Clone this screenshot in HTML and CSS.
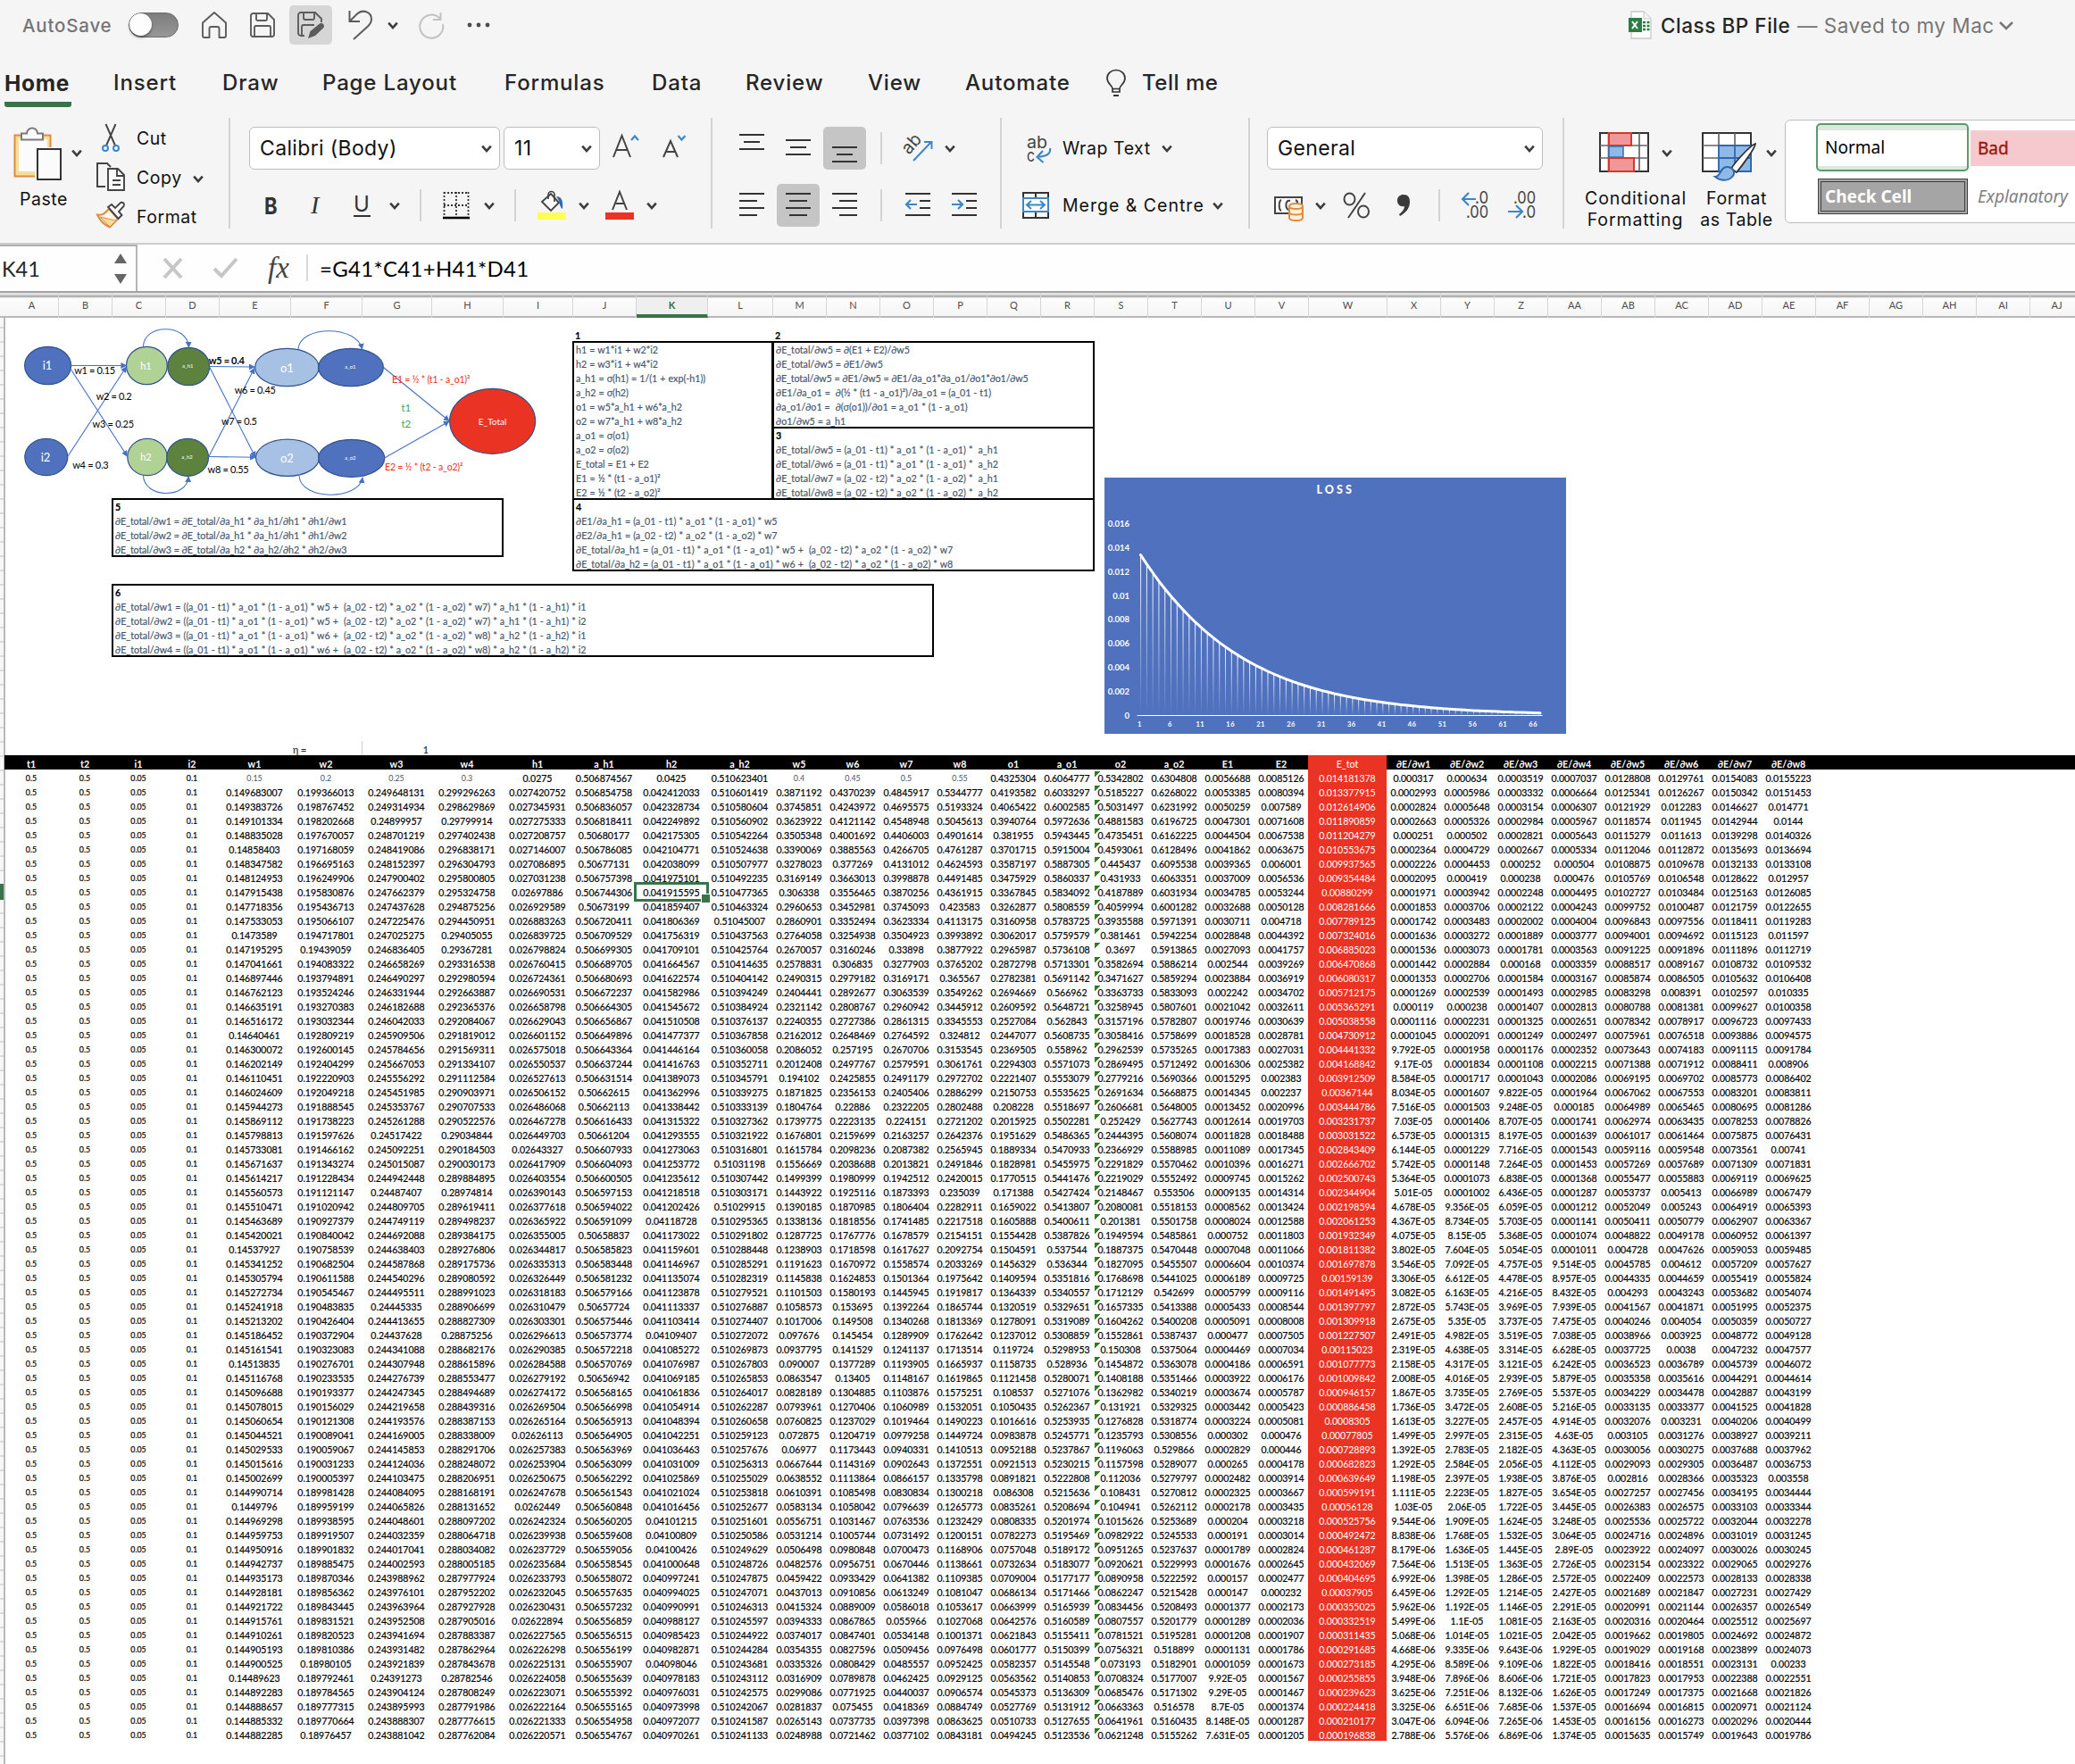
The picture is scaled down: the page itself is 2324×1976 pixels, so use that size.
FILE: index.html
```html
<!DOCTYPE html>
<html lang="en">
<head>
<meta charset="utf-8">
<title>Class BP File</title>
<link rel="stylesheet" href="styles.css">
</head>
<body>
<svg class="defs" width="0" height="0" aria-hidden="true">
  <symbol id="chev" viewBox="0 0 12 9"><path d="M1.2 1.6 6 7 10.8 1.6" fill="none" stroke="#3c3c3c" stroke-width="2.6"/></symbol>
  <symbol id="floppy" viewBox="0 0 28 28"><path d="M3.5 1H20l7 7v16.500a2.500 2.500 0 0 1-2.500 2.500h-21A2.500 2.500 0 0 1 1 24.500v-21A2.500 2.500 0 0 1 3.500 1zM7 1v6.500a1.500 1.500 0 0 0 1.500 1.500h9a1.500 1.500 0 0 0 1.500-1.500V1M5 27V16.500A1.500 1.500 0 0 1 6.500 15h15a1.500 1.500 0 0 1 1.500 1.500V27" fill="none" stroke="#5c5c5c" stroke-width="1.900"/></symbol>
</svg>

<header class="titlebar">
  <span class="autosave">AutoSave</span>
  <span class="toggle"><i></i></span>
  <svg width="30" height="32" viewBox="0 0 30 32"><path d="M2 13.500 15 2l13 11.500V28a2 2 0 0 1-2 2h-5.500V20a2 2 0 0 0-2-2h-7a2 2 0 0 0-2 2v10H4a2 2 0 0 1-2-2z" fill="none" stroke="#5c5c5c" stroke-width="1.900" stroke-linejoin="round"/></svg>
  <svg width="28" height="28"><use href="#floppy"/></svg>
  <span class="savebtn"><svg width="30" height="30" viewBox="0 0 30 30"><path d="M8 27H4a3 3 0 0 1-3-3V4a3 3 0 0 1 3-3h16l7 7v4M7 1v6a2 2 0 0 0 2 2h8a2 2 0 0 0 2-2V1M5 27V17a2 2 0 0 1 2-2h12" fill="none" stroke="#5c5c5c" stroke-width="1.900"/><path d="m12 30 2.500-8L25 13.500c3-1.500 6 1 4.500 4.500L20 27z" fill="#5c5c5c"/></svg></span>
  <svg width="28" height="34" viewBox="0 0 28 34"><path d="M1.500 1v12H13M1.500 13 10 4.500C16-1 26 2 26 10.500c0 3.500-1.500 5.500-4 8L6 33" fill="none" stroke="#5c5c5c" stroke-width="2"/></svg>
  <svg width="12" height="9"><use href="#chev"/></svg>
  <svg width="30" height="30" viewBox="0 0 30 30"><path d="M25 8A13 13 0 1 0 28 14M25.500 1v8H17" fill="none" stroke="#c2c2c2" stroke-width="2"/></svg>
  <svg width="26" height="6"><g fill="#4d4d4d"><circle cx="0" cy="3" r="2.400"/><circle cx="10" cy="3" r="2.400"/><circle cx="20" cy="3" r="2.400"/></g></svg>
  <svg width="28" height="32" viewBox="0 0 28 32"><path d="M4 1h14l8 8v22H4z" fill="#fff" stroke="#c9c9c9" stroke-width="1.300"/><path d="M18 1v8h8" fill="#f2f2f2" stroke="#c9c9c9"/><path d="M1 8h15v16H1z" fill="#2c7c45"/><path d="m5 12 6 8m0-8-6 8" stroke="#fff" stroke-width="2"/><path d="M17 13h3m1.500 0h3M17 17h3m1.500 0h3M17 21h3m1.500 0h3" stroke="#2c7c45" stroke-width="2.500"/></svg>
  <span class="docname">Class BP File</span><span class="saved">— Saved to my Mac</span>
  <svg width="18" height="11" viewBox="0 0 18 11"><path d="m2 2 7 7 7-7" fill="none" stroke="#777" stroke-width="2.500"/></svg>
</header>

<nav class="tabs">
  <span class="active">Home</span><span>Insert</span><span>Draw</span><span class="wide">Page Layout</span><span>Formulas</span><span>Data</span><span>Review</span><span>View</span><span>Automate</span>
  <svg width="22" height="32" viewBox="0 0 22 32"><path d="M7 21.500c0-4-6-5.500-6-12a10 9 0 0 1 20 0c0 6.500-6 8-6 12V25H7zM7 21.500h8" fill="none" stroke="#333" stroke-width="1.700"/><path d="M8 29h6" stroke="#333" stroke-width="2"/></svg>
  <span class="tell">Tell me</span>
</nav>

<section class="ribbon">
  <div class="group clip">
    <div class="paste">
      <svg width="56" height="62" viewBox="0 0 56 62"><path d="M1.500 9.500h40v46h-40z" fill="#f6dd9b" stroke="#e08b3e" stroke-width="2"/><path d="M6 14h32v36H6z" fill="#fbfbfb"/><path d="M9 14.500V7.500h6a6 6 0 0 1 12 0h6v7z" fill="#fafafa" stroke="#7a7a7a" stroke-width="2"/><path d="M24 23h32v39H24z" fill="#f5f5f5"/><path d="M27 25h26v34H27z" fill="#fbfbfb" stroke="#333" stroke-width="2"/></svg>
      <svg class="pchev" width="12" height="9"><use href="#chev"/></svg>
      <span class="lbl">Paste</span>
    </div>
    <div class="cliplist">
      <svg width="32" height="32" viewBox="0 0 32 32"><path d="M10.500 1 21 25M21.500 1 11 25" stroke="#444" stroke-width="1.900"/><g fill="none" stroke="#3d87c9" stroke-width="2"><circle cx="10" cy="28" r="3"/><circle cx="22" cy="28" r="3"/></g></svg><span class="lbl">Cut</span><i></i>
      <svg width="32" height="32" viewBox="0 0 32 32"><path d="M10 27H1V1h11l4 4" fill="none" stroke="#444" stroke-width="2"/><path d="M13 7h11l7 7v17H13zM23 7v8h8M18 20h9M18 25h9" fill="#fafafa" stroke="#444" stroke-width="1.900"/></svg><span class="lbl">Copy</span><svg width="12" height="9"><use href="#chev"/></svg>
      <svg width="32" height="30" viewBox="0 0 32 30"><path d="M1 14.500c6 1 9-2 13-6.500l10 11c-3 4-7 7-9 9.500C9 26 4 21 1 14.500z" fill="#fff8ee" stroke="#e08b3e" stroke-width="2"/><path d="m4 17 18 4-7 7z" fill="#f6dd9b" stroke="#e08b3e"/><path d="m13 6 4-3 4 4 6-6c3-1 5 1.500 3.500 4L25 11l3.500 4-4 4z" fill="#fafafa" stroke="#444" stroke-width="1.900"/></svg><span class="lbl">Format</span><i></i>
    </div>
  </div>
  <div class="sep"></div>
  <div class="group font">
    <div class="row font1">
      <div class="select fam"><span>Calibri (Body)</span><svg width="12" height="9"><use href="#chev"/></svg></div>
      <div class="select size"><span>11</span><svg width="12" height="9"><use href="#chev"/></svg></div>
      <svg width="30" height="30" viewBox="0 0 30 30"><path d="M1 27 10.500 3 20 27M4.500 19h12" fill="none" stroke="#444" stroke-width="2"/><path d="m21 8 4-4.500L29 8" fill="none" stroke="#3d87c9" stroke-width="2.200"/></svg>
      <svg width="28" height="30" viewBox="0 0 28 30"><path d="m1 27 8-18 8 18M4 21h10" fill="none" stroke="#444" stroke-width="2"/><path d="m17.500 3 4 4.500 4-4.500" fill="none" stroke="#3d87c9" stroke-width="2.200"/></svg>
    </div>
    <div class="row font2">
      <b class="fb">B</b><em class="fi">I</em><span class="fu">U</span><svg width="12" height="9"><use href="#chev"/></svg><div class="ms"></div>
      <svg width="30" height="32" viewBox="0 0 30 32"><path d="M1 2h28M1 16h28M1.500 1v26M15 1v26M28.500 1v26" stroke="#333" stroke-width="1.800" stroke-dasharray="2 2"/><path d="M0 30h30" stroke="#000" stroke-width="2.600"/></svg>
      <svg width="12" height="9"><use href="#chev"/></svg><div class="ms"></div>
      <svg width="32" height="34" viewBox="0 0 32 34"><path d="M5 13 15 4l9 10-9 9z" fill="#fafafa" stroke="#444" stroke-width="1.900"/><path d="M12 10V5a3.500 3.500 0 0 1 7 0v8" fill="none" stroke="#444" stroke-width="1.700"/><path d="M21 7c6 0 8 5 7 14-3-2-3-6-4-9z" fill="#2e6bb3"/><path d="M0 25h32v8H0z" fill="#ffff54"/></svg>
      <svg width="12" height="9"><use href="#chev"/></svg>
      <svg width="32" height="34" viewBox="0 0 32 34"><path d="M8 22 16 2l8 20M11 15h10" fill="none" stroke="#444" stroke-width="2"/><path d="M0 25h32v8H0z" fill="#eb3323"/></svg>
      <svg width="12" height="9"><use href="#chev"/></svg>
    </div>
  </div>
  <div class="sep"></div>
  <div class="group align">
    <div class="row align1">
      <span class="btn"><svg width="28" height="40"><path d="M0 5h28M5 13h18M0 21h28" stroke="#333" stroke-width="2"/></svg></span>
      <span class="btn"><svg width="28" height="40"><path d="M0 11h28M5 19h18M0 27h28" stroke="#333" stroke-width="2"/></svg></span>
      <span class="btn on"><svg width="28" height="40"><path d="M0 19h28M5 27h18M0 35h28" stroke="#333" stroke-width="2"/></svg></span>
      <div class="ms"></div>
      <svg width="34" height="32" viewBox="0 0 34 32"><text x="6" y="24" transform="rotate(-48 6 24)" font-family="Inter" font-size="20" textLength="23" lengthAdjust="spacingAndGlyphs" fill="#444">ab</text><path d="M11 30 31 9M23 9h8.500v8" fill="none" stroke="#3d87c9" stroke-width="2"/></svg>
      <svg width="12" height="9"><use href="#chev"/></svg>
    </div>
    <div class="row align2">
      <span class="btn"><svg width="28" height="40"><path d="M0 7h28M0 15h20M0 23h28M0 31h20" stroke="#333" stroke-width="2"/></svg></span>
      <span class="btn on"><svg width="28" height="40"><path d="M0 7h28M4 15h20M0 23h28M4 31h20" stroke="#333" stroke-width="2"/></svg></span>
      <span class="btn"><svg width="28" height="40"><path d="M0 7h28M8 15h20M0 23h28M8 31h20" stroke="#333" stroke-width="2"/></svg></span>
      <div class="ms"></div>
      <svg width="28" height="40"><path d="M0 7h28M16 15h12M16 23h12M0 31h28" stroke="#333" stroke-width="2"/><path d="M13 19H1M6 14l-5 5 5 5" fill="none" stroke="#3d87c9" stroke-width="2.200"/></svg>
      <svg width="28" height="40"><path d="M0 7h28M16 15h12M16 23h12M0 31h28" stroke="#333" stroke-width="2"/><path d="M0 19h12M7 14l5 5-5 5" fill="none" stroke="#3d87c9" stroke-width="2.200"/></svg>
    </div>
  </div>
  <div class="sep"></div>
  <div class="group wrap">
    <div class="row wrap1">
      <svg width="34" height="36" viewBox="0 0 34 36"><text x="5" y="18" font-family="Inter" font-size="19" textLength="23" lengthAdjust="spacingAndGlyphs" fill="#444">ab</text><text x="5" y="33" font-family="Inter" font-size="19" textLength="9" lengthAdjust="spacingAndGlyphs" fill="#444">c</text><path d="M31 18c1 6-3 9-14 10M23 21l-6.500 7 7 6" fill="none" stroke="#3d87c9" stroke-width="2.200"/></svg>
      <span class="lbl">Wrap Text</span><svg width="12" height="9"><use href="#chev"/></svg>
    </div>
    <div class="row wrap2">
      <svg width="30" height="32" viewBox="0 0 30 32"><path d="M1 2h28v28H1zM15 2v6M15 24v6" fill="#fafafa" stroke="#333" stroke-width="2"/><path d="M1 8h28v15H1z" fill="#fff" stroke="#3d87c9" stroke-width="2"/><path d="M5 15.500h20M10 11l-5 4.500 5 4.500M20 11l5 4.500-5 4.500" fill="none" stroke="#3d87c9" stroke-width="2"/></svg>
      <span class="lbl merge">Merge &amp; Centre</span><svg width="12" height="9"><use href="#chev"/></svg>
    </div>
  </div>
  <div class="sep"></div>
  <div class="group number">
    <div class="row num1"><div class="select gen"><span>General</span><svg width="12" height="9"><use href="#chev"/></svg></div></div>
    <div class="row num2">
      <svg width="33" height="36" viewBox="0 0 33 36"><path d="M1 9h30v18H1z" fill="#fafafa" stroke="#444" stroke-width="2"/><path d="M8 12c-3 1-3 11 0 12M24 12c3 1 2 3 2 5M18 13c-6-2-6 10-1 10" fill="none" stroke="#444" stroke-width="2"/><path d="M17 19c0-4 15-4 15 0v13c0 4-15 4-15 0z" fill="#fdf0df" stroke="#e08b3e" stroke-width="2"/><path d="M17 19c0 4 15 4 15 0M17 25.500c0 4 15 4 15 0" fill="none" stroke="#e08b3e" stroke-width="2"/></svg>
      <svg width="12" height="9"><use href="#chev"/></svg>
      <svg width="31" height="32" viewBox="0 0 31 32"><g fill="none" stroke="#444" stroke-width="2"><ellipse cx="7.500" cy="9" rx="6" ry="6.500"/><ellipse cx="23" cy="23" rx="6" ry="6.500"/><path d="M25 2 6 30"/></g></svg>
      <svg width="16" height="28" viewBox="0 0 16 28"><path d="M7 2c5 0 7 3 7 8 0 7-4 12-11 16l-1-2c4-3 6-6 6-9-5 1-8-2-8-6.500C0 4.500 3 2 7 2z" fill="#3a3a3a"/></svg>
      <div class="ms"></div>
      <svg class="dec" width="32" height="34"><text x="15" y="15" textLength="15" lengthAdjust="spacingAndGlyphs">.0</text><text x="5" y="31" textLength="25" lengthAdjust="spacingAndGlyphs">.00</text><path d="M16 10H1M8 3 1 10l7 7" fill="none" stroke="#3d87c9" stroke-width="2.200"/></svg>
      <svg class="dec" width="32" height="34"><text x="6" y="15" textLength="25" lengthAdjust="spacingAndGlyphs">.00</text><text x="16" y="31" textLength="15" lengthAdjust="spacingAndGlyphs">.0</text><path d="M0 24h16M9 17l7 7-7 7" fill="none" stroke="#3d87c9" stroke-width="2.200"/></svg>
    </div>
  </div>
  <div class="sep"></div>
  <div class="group styles">
    <div class="tile cf">
      <svg width="56" height="56" viewBox="0 0 56 56"><path d="M1 1h54v43H1z" fill="#fff" stroke="#333" stroke-width="2"/><path d="M1 15h54M1 29h54M10.500 1v43M45 1v43" stroke="#666" stroke-width="1.700"/><path d="M11 1h25v14H11z" fill="#f0979a" stroke="#d23a2a" stroke-width="2"/><path d="M11 16h16v12H11z" fill="#8fbae6" stroke="#3470b8" stroke-width="1.500"/><path d="M11 29h28v15H11z" fill="#f0979a" stroke="#d23a2a" stroke-width="2"/></svg>
      <svg width="12" height="9"><use href="#chev"/></svg>
      <span class="lbl two">Conditional<br>Formatting</span>
    </div>
    <div class="tile ft">
      <svg width="60" height="56" viewBox="0 0 60 56"><path d="M1 1h54v43H1z" fill="#fff" stroke="#333" stroke-width="2"/><path d="M1 15h54M1 29h54M19 1v43M37 1v43" stroke="#666" stroke-width="1.700"/><path d="M19 15h36v29H19z" fill="#8fbae6"/><path d="M19 44V15h36M19 29h36M37 15v29M55 15v29H19" fill="none" stroke="#2e68b4" stroke-width="1.800"/><path d="M60 13c-6 2-24 22-27 28l6 4c5-6 21-27 21-32z" fill="#fff" stroke="#333" stroke-width="1.800"/><path d="M15 50c6 0 6-12 14-11 7 1 9 7 5 11-4 5-13 5-19 0z" fill="#8fbae6" stroke="#2e68b4" stroke-width="2"/></svg>
      <svg width="12" height="9"><use href="#chev"/></svg>
      <span class="lbl two">Format<br>as Table</span>
    </div>
    <div class="gallery">
      <span class="g normal">Normal</span><span class="g bad">Bad</span>
      <span class="g check">Check Cell</span><span class="g expl">Explanatory</span>
    </div>
  </div>
</section>

<section class="formulabar">
  <div class="namebox"><span>K41</span><svg width="14" height="36"><path d="M7 1 14 12H0zM7 35 0 24h14z" fill="#666"/></svg></div>
  <svg width="24" height="24" viewBox="0 0 24 24"><path d="m2 2 19 21M21 2 2 23" stroke="#c6c6c6" stroke-width="4"/></svg>
  <svg width="30" height="24" viewBox="0 0 30 24"><path d="m2 13 8 8L27 2" fill="none" stroke="#c6c6c6" stroke-width="4"/></svg>
  <span class="fx">fx</span><i class="fsep"></i>
  <span class="formula">=G41*C41+H41*D41</span>
</section>

<div class="colheads" id="colheads"></div>

<main class="sheetwrap">
  <div class="rowheads"><i class="rowmark"></i></div>
  <div class="sheet">
    <div class="upper">
      <svg class="net" width="641" height="210" viewBox="5 356 641 210">
        <defs><marker id="arr" viewBox="0 0 8 8" refX="7" refY="4" markerWidth="7" markerHeight="7" markerUnits="userSpaceOnUse" orient="auto"><path d="M0 0 8 4 0 8z" fill="#4472c4"/></marker></defs>
        <g fill="#4f71be" stroke="#2f528f" stroke-width="1.200">
          <ellipse cx="53.600" cy="409.500" rx="26" ry="21.200"/><ellipse cx="51.800" cy="512" rx="24" ry="20.700"/>
          <ellipse cx="164.400" cy="409.500" rx="22.900" ry="21.200" fill="#b1d295"/><ellipse cx="165" cy="512" rx="22.200" ry="20.700" fill="#b1d295"/>
          <ellipse cx="211.200" cy="410.500" rx="23.400" ry="21.200" fill="#5d823e"/><ellipse cx="210.200" cy="512.300" rx="23.300" ry="21" fill="#5d823e"/>
          <ellipse cx="321.400" cy="411.500" rx="35.700" ry="21.200" fill="#a6c1e3"/><ellipse cx="322" cy="512.800" rx="35.500" ry="20.600" fill="#a6c1e3"/>
          <ellipse cx="393" cy="411.500" rx="36.400" ry="21.200"/><ellipse cx="393.700" cy="513.300" rx="37" ry="21"/>
          <ellipse cx="551.600" cy="471.800" rx="48" ry="36.500" fill="#eb3323"/>
        </g>
        <g fill="none" stroke="#4472c4" stroke-width="1.100">
          <path d="M79.600 409.500H141.500" marker-end="url(#arr)"/><path d="M79.600 414 142.500 511" marker-end="url(#arr)"/><path d="M76 511 141.500 411" marker-end="url(#arr)"/>
          <path d="M234.600 410.500 285 411" marker-end="url(#arr)"/><path d="M234.600 411 286 512" marker-end="url(#arr)"/><path d="M233.500 512 285 412.500" marker-end="url(#arr)"/><path d="M233.500 511.500 286 512.300" marker-end="url(#arr)"/>
          <path d="M429.400 411.500 503 471.500" marker-end="url(#arr)"/><path d="M430.600 513 503 472" marker-end="url(#arr)"/>
          <path d="M160.400 388.500C161 362 210 362 211.500 389" marker-end="url(#arr)"/><path d="M334 391C336 364 400 364 405.500 391" marker-end="url(#arr)"/>
          <path d="M160.400 532C161 559 210 559 211 534" marker-end="url(#arr)"/><path d="M335 533C337 561 402 561 406 535" marker-end="url(#arr)"/>
        </g>
        <g class="wt">
          <text x="83.200" y="419" textLength="46">w1 = 0.15</text><text x="107.700" y="448" textLength="40">w2 = 0.2</text><text x="103.600" y="478.500" textLength="46.500">w3 = 0.25</text><text x="81.200" y="525" textLength="40.500">w4 = 0.3</text>
          <text x="233.800" y="408" textLength="40" font-weight="700">w5 = 0.4</text><text x="262.800" y="441" textLength="46">w6 = 0.45</text><text x="248" y="476" textLength="40">w7 = 0.5</text><text x="232.600" y="530" textLength="46">w8 = 0.55</text>
        </g>
        <g class="er"><text x="439" y="428.500" textLength="87.500">E1 = ½ * (t1 - a_o1)²</text><text x="431" y="526.500" textLength="87.500">E2 = ½ * (t2 - a_o2)²</text></g>
        <g class="tg"><text x="449.400" y="461.300">t1</text><text x="449.400" y="479.300">t2</text></g>
        <g class="nd"><text x="53" y="414">i1</text><text x="51" y="516.500">i2</text><text x="163.500" y="413.500" font-size="11">h1</text><text x="163.500" y="515.500" font-size="11">h2</text><text x="321.400" y="416.500">o1</text><text x="321.400" y="517.500">o2</text><text x="551.600" y="475.500" font-size="10">E_Total</text></g>
        <g class="nd sm"><text x="210.200" y="412">a_h1</text><text x="209.500" y="514">a_h2</text><text x="392.300" y="413">a_o1</text><text x="392.300" y="515">a_o2</text></g>
      </svg>

      <b class="tag t1">1</b><b class="tag t2">2</b>
      <div class="box b1"><p>h1 = w1*i1 + w2*i2</p><p>h2 = w3*i1 + w4*i2</p><p>a_h1 = σ(h1) = 1/(1 + exp(-h1))</p><p>a_h2 = σ(h2)</p><p>o1 = w5*a_h1 + w6*a_h2</p><p>o2 = w7*a_h1 + w8*a_h2</p><p>a_o1 = σ(o1)</p><p>a_o2 = σ(o2)</p><p>E_total = E1 + E2</p><p>E1 = ½ * (t1 - a_o1)²</p><p>E2 = ½ * (t2 - a_o2)²</p></div>
      <div class="box b2"><p>∂E_total/∂w5 = ∂(E1 + E2)/∂w5</p><p>∂E_total/∂w5 = ∂E1/∂w5</p><p>∂E_total/∂w5 = ∂E1/∂w5 = ∂E1/∂a_o1*∂a_o1/∂o1*∂o1/∂w5</p><p>∂E1/∂a_o1 =  ∂(½ * (t1 - a_o1)²)/∂a_o1 = (a_01 - t1)</p><p>∂a_o1/∂o1 =  ∂(σ(o1))/∂o1 = a_o1 * (1 - a_o1)</p><p>∂o1/∂w5 = a_h1</p></div>
      <div class="box b3"><b>3</b><p>∂E_total/∂w5 = (a_01 - t1) * a_o1 * (1 - a_o1) *  a_h1</p><p>∂E_total/∂w6 = (a_01 - t1) * a_o1 * (1 - a_o1) *  a_h2</p><p>∂E_total/∂w7 = (a_02 - t2) * a_o2 * (1 - a_o2) *  a_h1</p><p>∂E_total/∂w8 = (a_02 - t2) * a_o2 * (1 - a_o2) *  a_h2</p></div>
      <div class="box b4"><b>4</b><p>∂E1/∂a_h1 = (a_01 - t1) * a_o1 * (1 - a_o1) * w5</p><p>∂E2/∂a_h1 = (a_02 - t2) * a_o2 * (1 - a_o2) * w7</p><p>∂E_total/∂a_h1 = (a_01 - t1) * a_o1 * (1 - a_o1) * w5 +  (a_02 - t2) * a_o2 * (1 - a_o2) * w7</p><p>∂E_total/∂a_h2 = (a_01 - t1) * a_o1 * (1 - a_o1) * w6 +  (a_02 - t2) * a_o2 * (1 - a_o2) * w8</p></div>
      <div class="box b5"><b>5</b><p>∂E_total/∂w1 = ∂E_total/∂a_h1 * ∂a_h1/∂h1 * ∂h1/∂w1</p><p>∂E_total/∂w2 = ∂E_total/∂a_h1 * ∂a_h1/∂h1 * ∂h1/∂w2</p><p>∂E_total/∂w3 = ∂E_total/∂a_h2 * ∂a_h2/∂h2 * ∂h2/∂w3</p></div>
      <div class="box b6"><b>6</b><p>∂E_total/∂w1 = ((a_01 - t1) * a_o1 * (1 - a_o1) * w5 +  (a_02 - t2) * a_o2 * (1 - a_o2) * w7) * a_h1 * (1 - a_h1) * i1</p><p>∂E_total/∂w2 = ((a_01 - t1) * a_o1 * (1 - a_o1) * w5 +  (a_02 - t2) * a_o2 * (1 - a_o2) * w7) * a_h1 * (1 - a_h1) * i2</p><p>∂E_total/∂w3 = ((a_01 - t1) * a_o1 * (1 - a_o1) * w6 +  (a_02 - t2) * a_o2 * (1 - a_o2) * w8) * a_h2 * (1 - a_h2) * i1</p><p>∂E_total/∂w4 = ((a_01 - t1) * a_o1 * (1 - a_o1) * w6 +  (a_02 - t2) * a_o2 * (1 - a_o2) * w8) * a_h2 * (1 - a_h2) * i2</p></div>
      <span class="eta">η =</span><span class="etaval">1</span>
      <svg class="chart" id="chart" width="517" height="287" viewBox="1237 535 517 287"></svg>
    </div>
    <table class="data" id="data"></table>
    <div class="selection"><i></i></div>
  </div>
</main>
<script src="sheet.js"></script>
</body>
</html>
```
FILE: styles.css
```css
* { box-sizing: border-box; }
body { margin: 0; width: 2324px; height: 1976px; overflow: hidden; background: #fff; font-family: Inter, "Liberation Sans", sans-serif; color: #262626; }
svg { display: block; overflow: visible; }
.defs { position: absolute; }
span, b, p { white-space: pre; }

.titlebar { height: 56px; background: #f5f5f5; display: grid; align-items: center; padding-left: 25px;
  grid-template-columns: 119px 81px 55px 44px 66px 44px 34px 58px 1297px 37px 153px 225px 18px; }
.autosave { color: #757575; font-size: 20.500px; letter-spacing: .8px; font-weight: 500; }
.toggle { width: 56px; height: 28px; border-radius: 14px; background: linear-gradient(#7d7d7d, #979797); border: 1.500px solid #6d6d6d; }
.toggle i { display: block; width: 25px; height: 25px; border-radius: 50%; background: #fdfdfd; box-shadow: 0 2px 3px rgba(0,0,0,.4); }
.savebtn { width: 48px; height: 44px; border-radius: 5px; background: #d6d6d6; display: grid; place-items: center; }
.docname { font-size: 22.500px; font-weight: 500; letter-spacing: .55px; }
.saved { font-size: 22.500px; color: #757575; letter-spacing: .5px; }

.tabs { height: 72px; background: #f5f5f5; padding-left: 5px; display: grid; align-items: start; font-size: 24px; font-weight: 500; letter-spacing: .85px;
  grid-template-columns: 122px 122px 112px 204px 165px 105px 137px 109px 158px 40px 100px; }
.tabs span { height: 64px; line-height: 74px; }
.tabs svg { margin-top: 22px; }
.tabs .active { width: 75px; font-size: 24.500px; font-weight: 700; letter-spacing: .7px; border-bottom: 6px solid #3a7249; border-radius: 3px; }
.tabs .tell { letter-spacing: .5px; }

.ribbon { height: 146px; background: #f5f5f5; border-bottom: 2px solid #cdcdcd; display: flex; overflow: hidden; }
.sep { width: 2px; height: 124px; margin-top: 4px; background: #d3d3d3; flex: none; }
.group { flex: none; padding-top: 14px; display: grid; grid-template-rows: 48px 48px; row-gap: 16px; align-content: start; }
.row { display: grid; align-items: center; height: 48px; }
.lbl { font-size: 19.500px; color: #111; letter-spacing: .55px; line-height: 24px; }
.clip { width: 256px; display: flex; padding-top: 10px; }
.paste { width: 108px; padding: 4px 0 0 15px; display: grid; grid-template-columns: 65px 12px; grid-template-rows: 69px 24px; align-items: start; }
.paste .lbl { grid-column: 1 / 3; padding-left: 7px; }
.pchev { margin-top: 25px; }
.cliplist { display: grid; grid-template-columns: 45px 63px 12px; grid-template-rows: 44px 44px 44px; align-items: start; }
.cliplist .lbl { padding-top: 5px; }
.cliplist svg:nth-child(6) { margin-top: 14px; }

.font { width: 538px; }
.font1 { padding-left: 21px; grid-template-columns: 285px 122px 56px 30px; align-items: start; }
.font1 > svg { margin-top: 7px; }
.font2 { padding-left: 38px; grid-template-columns: 51px 49px 40px 34px 26px 46px 34px 26px 46px 30px 46px 14px; }
.select { height: 48px; border: 1.500px solid #bdbdbd; border-radius: 6px; background: #fff; display: flex; align-items: center; justify-content: space-between; padding: 0 8px 0 11px; font-size: 23px; letter-spacing: .35px; color: #111; }
.fam { width: 281px; } .size { width: 108px; } .gen { width: 309px; margin-left: -1px; }
.fb { font-size: 26px; font-weight: 700; color: #333; transform: scaleX(.85); transform-origin: left; }
.fi { font: italic 28px "Liberation Serif", serif; color: #333; padding-left: 1px; }
.fu { font-size: 24px; width: 19px; color: #333; font-weight: 400; line-height: 24px; border-bottom: 2px solid #333; }
.ms { width: 2px; height: 36px; background: #d3d3d3; }

.align { width: 322px; }
.align .row { padding-left: 20px; }
.align1 { grid-template-columns: 52px 52px 64px 26px 46px 14px; }
.align2 { grid-template-columns: 52px 52px 64px 28px 52px 28px; }
.btn { width: 48px; height: 48px; display: grid; place-items: center; border-radius: 5px; }
.btn.on { background: #c5c5c5; }
.wrap { width: 276px; }
.wrap .row { padding-left: 23px; }
.wrap1 { grid-template-columns: 45px 111px 14px; }
.wrap2 { grid-template-columns: 45px 168px 14px; }
.merge { letter-spacing: 1px; }
.number { width: 350px; }
.num1 { padding-left: 20px; }
.num2 { padding-left: 27px; grid-template-columns: 46px 31px 61px 46px 26px 52px 32px; }
.dec text { font: 19px Inter, sans-serif; fill: #444; }

.styles { display: flex; padding: 6px 0 0 23px; }
.tile { display: grid; grid-template-rows: 62px 50px; align-items: start; padding-top: 14px; text-align: center; }
.cf { width: 129px; grid-template-columns: 70px 43px; padding-left: 16px; }
.ft { width: 95px; grid-template-columns: 72px 12px; padding-left: 2px; }
.tile svg + svg { margin-top: 19px; }
.two { grid-column: 1 / 3; }
.cf .two { margin: 0 16px 0 -16px; letter-spacing: .9px; }
.ft .two { margin: 0 4px 0 -2px; }
.gallery { width: 360px; height: 116px; border: 1.500px solid #bdbdbd; border-radius: 6px; background: #fff; padding: 3px 0 0 34px; display: grid; grid-template-columns: 173px 130px; grid-template-rows: 62px 40px; font: 19px "Noto Sans", sans-serif; }
.g { display: flex; align-items: center; padding-left: 8px; }
.normal { width: 171px; height: 54px; border: 2px solid #5a9a6c; border-radius: 5px; background: linear-gradient(#dbe7df 6px, #fff 6px, #fff 46px, #dbe7df 46px); color: #000; }
.bad { height: 40px; margin-top: 8px; background: #f6c9ce; color: #99190f; -webkit-text-stroke: .4px; }
.check { width: 168px; height: 40px; margin-left: 2px; border: 4px double #3f3f3f; background: #a5a5a5; color: #fff; font-weight: 700; padding-left: 4px; }
.expl { color: #7f7f7f; font-style: italic; }

.formulabar { height: 52px; background: #fefefe; display: grid; align-items: center; grid-template-columns: 182px 56px 62px 43px 16px 500px; }
.namebox { width: 154px; height: 52px; border-top: 2px solid #b0b0b0; border-right: 2px solid #b5b5b5; display: flex; align-items: center; justify-content: space-between; padding: 0 10px 0 2px; font: 23.500px Lato, sans-serif; }
.fx { font: italic 33px "Liberation Serif", serif; color: #444; }
.fsep { width: 2px; height: 30px; background: #d9d9d9; }
.formula { font: 24px Lato, sans-serif; letter-spacing: .3px; color: #000; margin-left: -1px; }

.colheads { height: 30px; border-top: 2px solid #a3a3a3; border-bottom: 2px solid #b9b9b9; padding-left: 6px; display: flex; background: linear-gradient(#e4e4e4 2px, #9e9e9e 4px, #fdfdfd 6px, #f5f5f5); font: 11px Lato, sans-serif; color: #4d4d4d; }
.colheads span { flex: none; text-align: center; line-height: 20px; padding-top: 4px; height: 28px; border-right: 1.500px solid #d6d6d6; }
.colheads .sel { background: linear-gradient(transparent 5px, #efefef 5px); color: #2e6b3f; border-bottom: 4px solid #3a7249; font-weight: 700; }

.sheetwrap { display: flex; height: 1620px; }
.rowheads { width: 6px; flex: none; border-right: 2px solid #b9b9b9; background: repeating-linear-gradient(#f7f7f7 0 14px, #dcdcdc 14px 16px); background-position: 0 -4px; padding-top: 634px; }
.rowmark { display: block; width: 4px; height: 18px; background: #3a7249; }
.sheet { position: relative; width: 2318px; margin-left: -1px; }
.upper { height: 490px; padding-top: 10px; display: grid; grid-auto-rows: 16px; grid-template-rows: repeat(30, 16px);
  grid-template-columns: 60px 60px 60px 60px 80px 80px 78px 80px 78px 71px 80px 73px repeat(10, 60px) 88px; font: 10.700px/16px Lato, sans-serif; -webkit-text-stroke: .15px; }
.upper p, .upper b { margin: 0; height: 16px; line-height: 20px; }
.upper p { color: #44546a; word-spacing: .3px; }
.upper b { color: #000; }
.upper svg { -webkit-text-stroke: 0; }
.tag { padding-left: 3px; }
.t1 { grid-area: 1 / 10; } .t2 { grid-area: 1 / 13; }
.box { border: 2px solid #000; margin: 0 -1px -2px 0; padding-left: 2px; display: flex; flex-direction: column; }
.box > :first-child { margin-top: -2px; }
.b1 { grid-area: 2 / 10 / 13 / 13; } .b2 { grid-area: 2 / 13 / 8 / 19; } .b3 { grid-area: 8 / 13 / 13 / 19; }
.b4 { grid-area: 13 / 10 / 18 / 19; } .b5 { grid-area: 13 / 3 / 17 / 9; } .b6 { grid-area: 19 / 3 / 24 / 16; }
.b2 p { letter-spacing: -.04px; } .b2 p:nth-child(3) { letter-spacing: -.14px; }
.b5 p { letter-spacing: -.12px; }
.eta { grid-area: 30 / 6; padding-left: 3px; line-height: 20px; }
.etaval { grid-area: 30 / 7; text-align: right; padding-right: 3px; line-height: 20px; border-left: 1.500px solid #d0d0d0; }
.net { position: absolute; left: 0; top: 0; }
.chart { position: absolute; left: 1232px; top: 179px; }
.net text { font-family: Lato, sans-serif; }
.wt { font-size: 11px; fill: #000; } .er { font-size: 10.500px; fill: #eb3323; } .tg { font-size: 11.500px; fill: #3fa650; }
.nd { font-size: 13px; fill: #fff; text-anchor: middle; } .nd.sm { font-size: 6px; }
.chart text { font-family: Lato, sans-serif; fill: #fff; }

.data { border-collapse: collapse; table-layout: fixed; width: 2328px; font: 10.500px/16px Lato, sans-serif; color: #000; -webkit-text-stroke: .2px; }
.data td, .data th { padding: 0; height: 16px; line-height: 20px; text-align: center; white-space: nowrap; }
.data .v { display: block; height: 16px; overflow: visible; }
.data th { background: #000; color: #fff; font-weight: 700; font-size: 10.700px; -webkit-text-stroke: 0; }
.data .etot { background: #eb3323; color: #fff; font-weight: 400; -webkit-text-stroke: 0; }
.data .inp { font-size: 8.800px; }
.data .init { font-size: 8.800px; color: #44546a; -webkit-text-stroke: 0; }
.data .warn { background: linear-gradient(135deg, #2f7d1f 4.500px, transparent 4.500px) 1px 2px no-repeat; }
.selection { position: absolute; left: 705px; top: 632px; width: 84px; height: 22px; border: 3px solid #3a7249; }
.selection i { position: absolute; right: -4px; bottom: -4px; width: 10px; height: 10px; background: #3a7249; border: solid #fff; border-width: 1px 0 0 1px; }
```
FILE: sheet.js
```js
const widths = [60,60,60,60,80,80,78,80,78,71,80,73,60,60,60,60,60,60,60,60,60,60,88];
while (widths.length < 36) widths.push(60);
const letter = i => i < 26 ? String.fromCharCode(65 + i) : 'A' + String.fromCharCode(39 + i);

document.getElementById('colheads').innerHTML = widths.map((w, i) =>
  `<span class="${i === 10 ? 'sel' : ''}" style="width:${w}px">${letter(i)}</span>`).join('');

// Two-input, two-hidden, two-output network trained by gradient descent
const sig = x => 1 / (1 + Math.exp(-x));
const t1 = 0.5, t2 = 0.5, i1 = 0.05, i2 = 0.1, eta = 1;
let w = [0.15, 0.2, 0.25, 0.3, 0.4, 0.45, 0.5, 0.55];
const rows = [];
for (let n = 0; n < 68; n++) {
  const h1 = w[0] * i1 + w[1] * i2, h2 = w[2] * i1 + w[3] * i2;
  const a1 = sig(h1), a2 = sig(h2);
  const o1 = w[4] * a1 + w[5] * a2, o2 = w[6] * a1 + w[7] * a2;
  const p1 = sig(o1), p2 = sig(o2);
  const e1 = 0.5 * (t1 - p1) ** 2, e2 = 0.5 * (t2 - p2) ** 2;
  const d1 = (p1 - t1) * p1 * (1 - p1), d2 = (p2 - t2) * p2 * (1 - p2);
  // the sheet uses a_h1's slope for both hidden units
  const slope = a1 * (1 - a1);
  const g1 = (d1 * w[4] + d2 * w[6]) * slope, g2 = (d1 * w[5] + d2 * w[7]) * slope;
  const g = [g1 * i1, g1 * i2, g2 * i1, g2 * i2, d1 * a1, d1 * a2, d2 * a1, d2 * a2];
  rows.push([t1, t2, i1, i2, w[0], w[1], w[2], w[3], h1, a1, h2, a2, w[4], w[5], w[6], w[7], o1, p1, o2, p2, e1, e2, e1 + e2, ...g]);
  w = w.map((x, k) => x - eta * g[k]);
}

// General number format: as many digits as the column width allows
function general(v, width) {
  if (v < 1e-4) {
    const [m, e] = v.toExponential(3).split('e-');
    return `${+m}E-${e.padStart(2, '0')}`;
  }
  return String(+v.toFixed(width > 60 ? 9 : 7));
}

const names = ['t1','t2','i1','i2','w1','w2','w3','w4','h1','a_h1','h2','a_h2','w5','w6','w7','w8','o1','a_o1','o2','a_o2','E1','E2','E_tot',
  '∂E/∂w1','∂E/∂w2','∂E/∂w3','∂E/∂w4','∂E/∂w5','∂E/∂w6','∂E/∂w7','∂E/∂w8'];
const cls = (c, r) => c === 22 ? 'etot' : r < 0 ? '' : c < 4 ? 'inp' : r === 0 && ((c > 3 && c < 8) || (c > 11 && c < 16)) ? 'init' : c === 18 ? 'warn' : '';
document.getElementById('data').innerHTML =
  '<colgroup>' + widths.map(x => `<col style="width:${x}px">`).join('') + '</colgroup>' +
  '<tr>' + widths.map((_, c) => `<th class="${cls(c, -1)}"><span class="v">${names[c] || ''}</span></th>`).join('') + '</tr>' +
  rows.map((row, r) => '<tr>' + row.map((v, c) => `<td class="${cls(c, r)}"><span class="v">${general(v, widths[c])}</span></td>`).join('') + '</tr>').join('');

// Loss chart with fading drop lines
const X = i => 1277.5 + i * 6.78, Y = v => 801.3 - v / 0.002 * 26.87;
const loss = rows.slice(1).map(r => r[22]);
let s = '<defs><linearGradient id="drop" x1="0" y1="0" x2="0" y2="1"><stop offset="0" stop-color="#fff"/><stop offset="1" stop-color="#fff" stop-opacity="0"/></linearGradient></defs>' +
  '<rect x="1237" y="535" width="517" height="287" fill="#4f71be"/>' +
  '<text x="1474.500" y="552.700" font-size="12.500" font-weight="900" textLength="39.500">LOSS</text>';
for (let k = 0; k <= 8; k++) s += `<text x="1265" y="${Y(k * 0.002) + 3.6}" font-size="9.5" font-weight="700" text-anchor="end">${+(k * 0.002).toFixed(3)}</text>`;
for (let k = 0; k < 67; k += 5) s += `<text x="${X(k) - 1}" y="814" font-size="7.500" font-weight="700" letter-spacing=".5" text-anchor="middle">${k + 1}</text>`;
loss.forEach((v, i) => { s += `<rect x="${X(i) - 0.4}" y="${Y(v)}" width="1" height="${801.3 - Y(v)}" fill="url(#drop)"/>`; });
s += '<path d="M1273.600 801.500H1727.500" stroke="#fff"/>' +
  `<path d="M${loss.map((v, i) => X(i).toFixed(1) + ' ' + Y(v).toFixed(1)).join('L')}" fill="none" stroke="#fff" stroke-width="3" stroke-linecap="round" stroke-linejoin="round"/>`;
document.getElementById('chart').innerHTML = s;
```
